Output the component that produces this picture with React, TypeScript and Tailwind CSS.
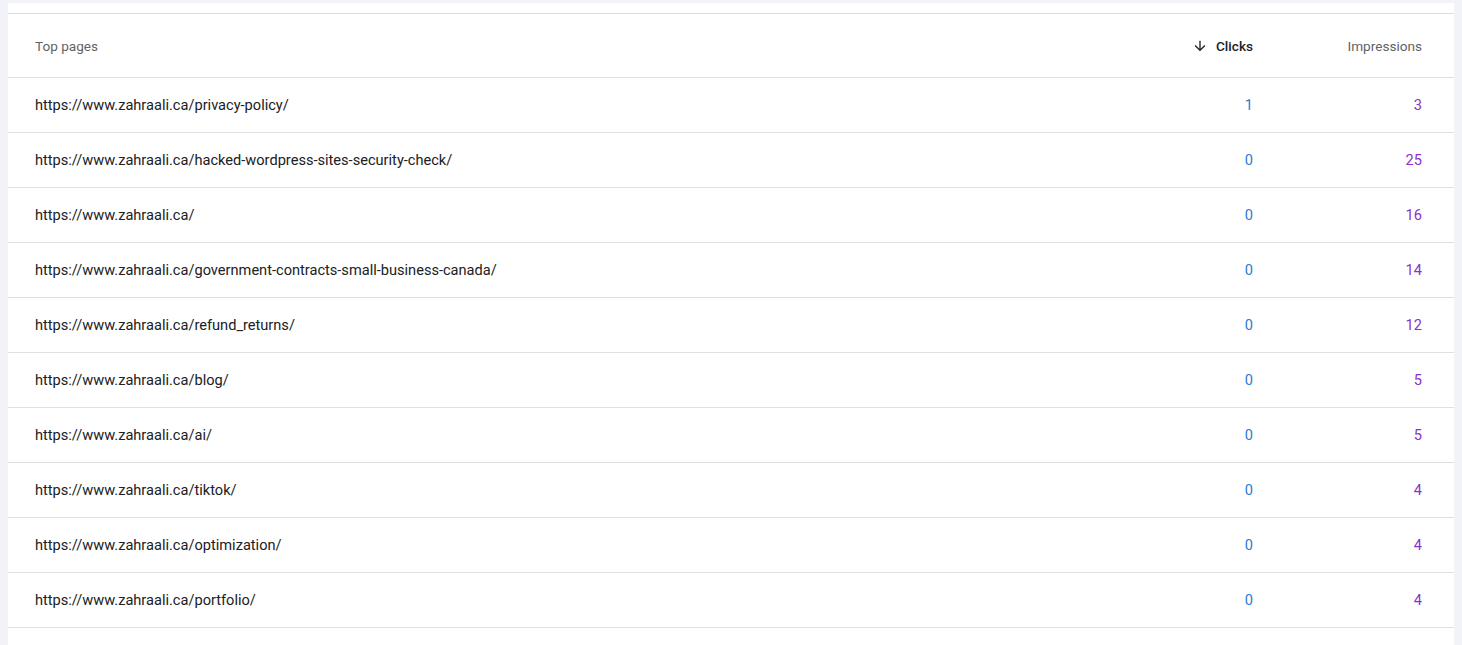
import React from "react";

const rows: [string, number, number][] = [
  ["https://www.zahraali.ca/privacy-policy/", 1, 3],
  ["https://www.zahraali.ca/hacked-wordpress-sites-security-check/", 0, 25],
  ["https://www.zahraali.ca/", 0, 16],
  ["https://www.zahraali.ca/government-contracts-small-business-canada/", 0, 14],
  ["https://www.zahraali.ca/refund_returns/", 0, 12],
  ["https://www.zahraali.ca/blog/", 0, 5],
  ["https://www.zahraali.ca/ai/", 0, 5],
  ["https://www.zahraali.ca/tiktok/", 0, 4],
  ["https://www.zahraali.ca/optimization/", 0, 4],
  ["https://www.zahraali.ca/portfolio/", 0, 4],
];

export default function App() {
  return (
    <div
      className="w-[1462px] h-[645px] overflow-hidden bg-[#f1f3f9] pt-[3px] px-[8px]"
      style={{ fontFamily: "Roboto, 'Liberation Sans', sans-serif" }}
    >
      <div className="bg-white h-full pt-[10px]">
        <div className="border-t border-[#dadce0]">
          <div className="flex items-center h-[64px] pt-[2px] border-b border-[#e0e0e0] pl-[27px] pr-[32px] text-[13.6px]">
            <div className="flex-1 text-[#5f6368]">Top pages</div>
            <div className="flex items-center justify-end text-[#202124] font-medium">
              <svg width="16" height="16" viewBox="0 0 24 24" className="mr-[8px]">
                <path d="M20 12l-1.41-1.41L13 16.17V4h-2v12.17l-5.58-5.59L4 12l8 8 8-8z" fill="#202124" />
              </svg>
              Clicks
            </div>
            <div className="w-[169px] text-right text-[#5f6368]">Impressions</div>
          </div>
          {rows.map(([url, c, i]) => (
            <div
              key={url}
              className="flex items-center h-[55px] pt-[2px] border-b border-[#e0e0e0] pl-[27px] pr-[32px] text-[14.6px]"
            >
              <div className="flex-1 text-[#202124]">{url}</div>
              <div className="text-right text-[#2b7bd6]">{c}</div>
              <div className="w-[169px] text-right text-[#8a32c9]">{i}</div>
            </div>
          ))}
        </div>
      </div>
    </div>
  );
}
